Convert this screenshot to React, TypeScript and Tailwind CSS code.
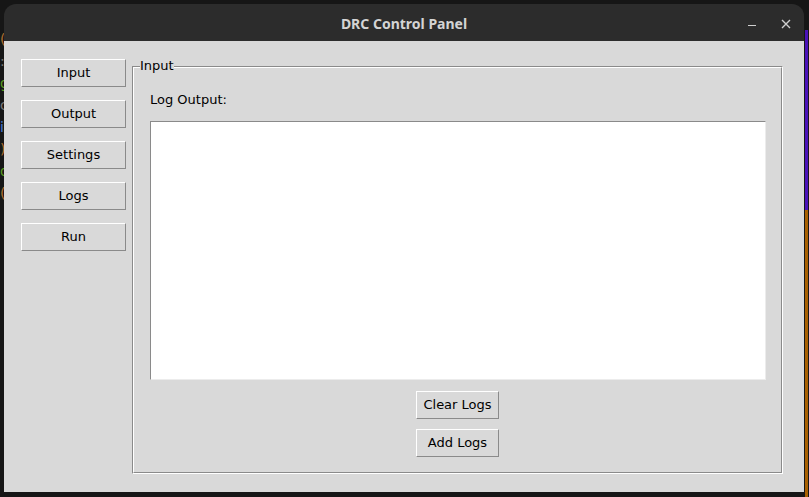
import React from "react";

const font = { fontFamily: '"DejaVu Sans", "Liberation Sans", sans-serif' };

function TkButton({ children, className = "" }: { children: React.ReactNode; className?: string }) {
    return (
        <button
            className={`h-[28px] bg-[#d9d9d9] border border-t-white border-l-white border-b-[#8a8a8a] border-r-[#8a8a8a] text-[13px] text-black flex items-center justify-center ${className}`}
        >
            {children}
        </button>
    );
}

function TitleBar() {
    return (
        <div className="h-[37px] bg-[#2c2c2c] flex items-center relative shrink-0">
            <div className="flex-1 text-center text-[14px] font-bold text-[#d4d4d4] pt-[1px]" style={{ fontFamily: '"Noto Sans", "DejaVu Sans", sans-serif' }}>
                DRC Control Panel
            </div>
            <div className="absolute right-[13px] top-[15px] flex items-start gap-[25px]">
                <div className="w-[8px] h-[1px] bg-[#cfcfcf] mt-[6px]" />
                <svg width="10" height="10" viewBox="0 0 10 10" className="text-[#cfcfcf]">
                    <path d="M1 1 L9 9 M9 1 L1 9" stroke="currentColor" strokeWidth="1.4" />
                </svg>
            </div>
        </div>
    );
}

function InputFrame() {
    return (
        <div className="relative w-[651px] h-[408px] mt-[7px] border border-t-[#8a8a8a] border-l-[#8a8a8a] border-b-white border-r-white">
            <span className="absolute left-[7px] top-[-9px] bg-[#d9d9d9] text-[13px] leading-[16px] text-black">Input</span>
            <div className="h-full border border-t-white border-l-white border-b-[#8a8a8a] border-r-[#8a8a8a] flex flex-col pl-[16px] pr-[15px] pt-[24px]">
                <div className="text-[13px] leading-[16px] text-black">Log Output:</div>
                <div className="mt-[13px] h-[259px] bg-white border border-t-[#8a8a8a] border-l-[#8a8a8a] border-b-[#ececec] border-r-[#ececec]" />
                <div className="flex flex-col items-center gap-[10px] mt-[11px] pr-[1px]">
                    <TkButton className="w-[83px]">Clear Logs</TkButton>
                    <TkButton className="w-[83px]">Add Logs</TkButton>
                </div>
            </div>
        </div>
    );
}

export default function App() {
    return (
        <div className="w-[809px] h-[497px] bg-[#161616] flex pt-[4px]" style={font}>
            <div className="w-[4px] overflow-hidden flex flex-col gap-[8px] pt-[28px] text-[14px] leading-[14px]">
                <span className="text-[#b07030]">(</span>
                <span className="text-[#777]">:</span>
                <span className="text-[#5a9a20]">g</span>
                <span className="text-[#777]">c</span>
                <span className="text-[#4a7ad0]">i</span>
                <span className="text-[#b07030]">)</span>
                <span className="text-[#5a9a20]">q</span>
                <span className="text-[#b07030]">(</span>
            </div>
            <div className="w-[800px] h-[488px] rounded-t-[12px] overflow-hidden flex flex-col">
                <TitleBar />
                <div className="flex-1 bg-[#d9d9d9] flex pl-[17px] pt-[18px]">
                    <div className="w-[105px] flex flex-col gap-[13px]">
                        <TkButton>Input</TkButton>
                        <TkButton>Output</TkButton>
                        <TkButton>Settings</TkButton>
                        <TkButton>Logs</TkButton>
                        <TkButton>Run</TkButton>
                    </div>
                    <div className="ml-[6px]">
                        <InputFrame />
                    </div>
                </div>
            </div>
            <div className="ml-[1px] w-[3px] h-[467px] mt-[26px] flex flex-col">
                <div className="h-[180px] bg-[#4a12b8]" />
                <div className="flex-1 bg-[#a86000]" />
            </div>
        </div>
    );
}
